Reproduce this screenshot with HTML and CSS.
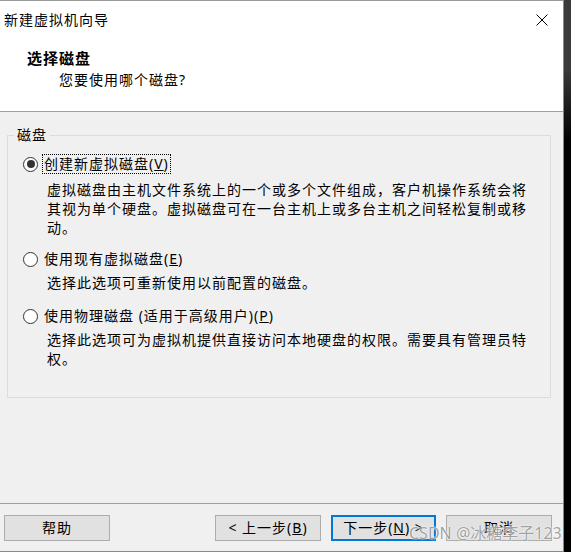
FILE: index.html
```html
<!DOCTYPE html>
<html lang="zh-CN">
<head>
<meta charset="utf-8">
<title>新建虚拟机向导</title>
<link rel="stylesheet" href="styles.css">
</head>
<body>
<div class="window">
  <div class="header">
    <div class="titlebar">
      <span class="title">新建虚拟机向导</span>
      <svg class="close" width="14" height="14" viewBox="0 0 14 14"><path d="M1.5 1.5 L12.5 12.5 M12.5 1.5 L1.5 12.5" stroke="#000" stroke-width="1" fill="none"/></svg>
    </div>
    <div class="heading">选择磁盘</div>
    <div class="subtitle">您要使用哪个磁盘?</div>
  </div>
  <div class="content">
    <fieldset class="group">
      <legend>磁盘</legend>
      <div class="option first">
        <div class="radio-row">
          <span class="radio checked"></span>
          <span class="label focus">创建新虚拟磁盘(<u>V</u>)</span>
        </div>
        <div class="desc">虚拟磁盘由主机文件系统上的一个或多个文件组成，客户机操作系统会将<br>其视为单个硬盘。虚拟磁盘可在一台主机上或多台主机之间轻松复制或移<br>动。</div>
      </div>
      <div class="option">
        <div class="radio-row">
          <span class="radio"></span>
          <span class="label">使用现有虚拟磁盘(<u>E</u>)</span>
        </div>
        <div class="desc">选择此选项可重新使用以前配置的磁盘。</div>
      </div>
      <div class="option">
        <div class="radio-row">
          <span class="radio"></span>
          <span class="label">使用物理磁盘 (适用于高级用户)(<u>P</u>)</span>
        </div>
        <div class="desc">选择此选项可为虚拟机提供直接访问本地硬盘的权限。需要具有管理员特<br>权。</div>
      </div>
    </fieldset>
  </div>
  <div class="footer">
    <button class="btn">帮助</button>
    <div class="spacer"></div>
    <button class="btn">&lt; 上一步(<u>B</u>)</button>
    <button class="btn default">下一步(<u>N</u>) &gt;</button>
    <button class="btn">取消</button>
  </div>
  <div class="watermark">CSDN @冰糖李子123</div>
</div>
</body>
</html>
```

FILE: styles.css
```css
* { box-sizing: border-box; }
html, body { margin: 0; padding: 0; }
body {
  width: 571px;
  height: 552px;
  overflow: hidden;
  background: linear-gradient(to bottom, #3a3a3a 0, #3a3a3a 70px, #000 140px);
  font-family: "Noto Sans", "Noto Sans CJK SC", sans-serif;
  font-size: 14px;
  letter-spacing: 1px;
  color: #000;
}
.window {
  position: relative;
  width: 564px;
  height: 552px;
  background: #f0f0f0;
  border-top: 1px solid #9a9a9a;
  border-right: 1px solid #8a8a8a;
  border-bottom: 1px solid #8a8a8a;
  display: flex;
  flex-direction: column;
}
.header {
  height: 111px;
  flex: none;
  background: #fff;
  border-bottom: 1px solid #a0a0a0;
}
.titlebar {
  height: 40px;
  display: flex;
  align-items: center;
  justify-content: space-between;
  padding: 0 14px 2px 4px;
}
.title { line-height: 20px; }
.close { display: block; }
.heading {
  margin: 7px 0 0 27px;
  line-height: 20px;
  font-size: 15px;
  font-weight: bold;
}
.subtitle {
  margin: 2px 0 0 59px;
  line-height: 20px;
}
.content {
  padding: 13px 12px 0 7px;
}
.group {
  margin: 0;
  padding: 9px 0 29px 0;
  border: 1px solid #dcdcdc;
}
.group legend {
  margin-left: 6px;
  padding: 0 3px;
  line-height: 20px;
}
.option + .option { margin-top: 14px; }
.option.first + .option { margin-top: 12px; }
.radio-row {
  display: flex;
  align-items: center;
  height: 20px;
  padding-left: 15px;
}
.radio {
  width: 15px;
  height: 15px;
  border: 1px solid #333;
  border-radius: 50%;
  background: #fff;
  margin-right: 4px;
  display: flex;
  align-items: center;
  justify-content: center;
  flex: none;
}
.radio.checked::after {
  content: "";
  width: 8px;
  height: 8px;
  border-radius: 50%;
  background: #333;
}
.label {
  line-height: 18px;
  padding: 0 1px;
  border: 1px solid transparent;
}
.label.focus { border: 1px dotted #000; }
.desc {
  margin-top: 4px;
  padding-left: 39px;
  line-height: 19px;
}
.option.first .desc { margin-top: 6px; }
.footer {
  margin-top: auto;
  height: 48px;
  border-top: 1px solid #a0a0a0;
  display: flex;
  align-items: flex-start;
  padding: 11px 11px 0 4px;
  gap: 10px;
}
.spacer { flex: 1; }
.btn {
  width: 106px;
  height: 26px;
  background: #e1e1e1;
  border: 1px solid #adadad;
  font: inherit;
  letter-spacing: 1px;
  color: #000;
  padding: 0;
  line-height: 22px;
}
.btn.default {
  border: 2px solid #0078d7;
  width: 105px;
}
.watermark {
  position: absolute;
  left: 409px;
  top: 520px;
  font-size: 16px;
  letter-spacing: 0;
  color: rgba(120, 120, 120, 0.7);
  text-shadow: 0 0 1px #fff, 0 0 2px #fff;
  line-height: 24px;
  white-space: nowrap;
}
```
